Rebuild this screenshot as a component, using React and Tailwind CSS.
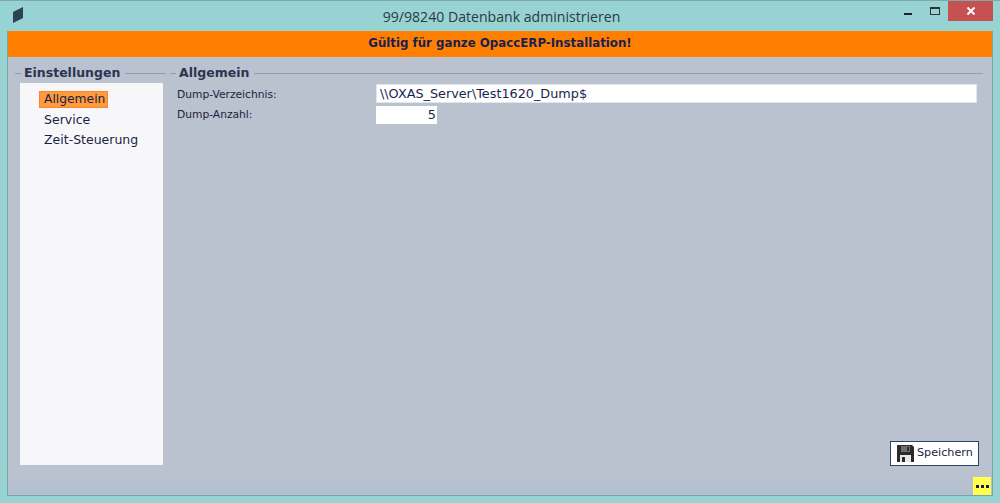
import React from "react";

const ui = "font-['DejaVu_Sans',sans-serif]";

function Legend({ text, className }) {
  return (
    <div className={`flex items-center h-[16px] ${className || ""}`}>
      <span className="w-[6px] h-px bg-[#8a9dbb]" />
      <span className="px-[3px] text-[12.5px] font-bold leading-[16px] text-[#2c3550] whitespace-nowrap">{text}</span>
      <span className="flex-1 h-px ml-[2px] bg-[#8a9dbb]" />
    </div>
  );
}

function FloppyIcon() {
  return (
    <svg width="17" height="17" viewBox="0 0 17 17">
      <path d="M0 0H15L17 2V17H0Z" fill="#2b2b2b" />
      <rect x="4" y="1" width="9" height="6" fill="#6e6e6e" />
      <rect x="10" y="2" width="2" height="4" fill="#2b2b2b" />
      <rect x="3" y="10" width="11" height="7" fill="#e8e8e8" />
      <rect x="5" y="12" width="3" height="5" fill="#2b2b2b" />
    </svg>
  );
}

export default function App() {
  return (
    <div className={`w-[1000px] h-[503px] flex flex-col overflow-hidden bg-[#97d3d2] border-t border-[#7fa9ac] ${ui}`}>
      <div className="h-[30px] shrink-0 flex items-center relative">
        <svg className="absolute left-[13px] top-[6px]" width="11" height="16" viewBox="0 0 11 16">
          <path d="M0 5L10 0V11L0 16Z" fill="#2c4257" />
        </svg>
        <div className="flex-1 text-center text-[14.1px] text-[#2d3a42] font-['Open_Sans',sans-serif] pt-[1px] pl-[3px]">
          99/98240 Datenbank administrieren
        </div>
        <div className="absolute right-[7px] top-0 flex items-start">
          <div className="w-[8px] h-[2px] bg-[#222] mt-[12px] mr-[18px]" />
          <div className="w-[10px] h-[8px] border border-[#333] border-t-2 mt-[6px] mr-[8px]" />
          <div className="w-[45px] h-[20px] bg-[#c75050] flex items-center justify-center">
            <svg width="8" height="8" viewBox="0 0 8 8">
              <path d="M0.5 0.5L7.5 7.5M7.5 0.5L0.5 7.5" stroke="#fff" strokeWidth="2" />
            </svg>
          </div>
        </div>
      </div>

      <div className="mx-[7px] flex-1 min-h-0 flex flex-col bg-[#bac1cf] border-l border-r border-b border-[#78a4a6]">
        <div className="h-[26px] shrink-0 bg-[#ff8000] flex items-center justify-center text-[11.8px] font-bold text-[#1a1f50]">
          Gültig für ganze OpaccERP-Installation!
        </div>

        <div className="flex-1 min-h-0 flex pt-[8px] pl-[7px] pr-[9px]">
          <div className="w-[151px] shrink-0 flex flex-col">
            <Legend text="Einstellungen" />
            <div className="ml-[5px] w-[143px] h-[382px] mt-[2px] bg-[#f7f7fa] pt-[8px] pl-[19px] flex flex-col items-start gap-[3px]">
              <div className="h-[17px] w-[69px] bg-[#ff9a3e] border border-[#f08a2c] text-[12.3px] leading-[15px] text-[#1a1f40] pl-[4px]">Allgemein</div>
              <div className="h-[17px] text-[12.5px] leading-[17px] text-[#1a1f40] pl-[5px]">Service</div>
              <div className="h-[17px] text-[12.5px] leading-[17px] text-[#1a1f40] pl-[5px]">Zeit-Steuerung</div>
            </div>
          </div>

          <div className="flex-1 min-w-0 ml-[4px] flex flex-col">
            <Legend text="Allgemein" />
            <div className="mt-[3px] flex items-center h-[19px] pl-[7px]">
              <span className="w-[199px] shrink-0 text-[10.7px] leading-[15px] pt-[1px] text-[#1a1f40]">Dump-Verzeichnis:</span>
              <div className="w-[601px] h-[19px] bg-white border border-[#e2e5ec] text-[12.8px] leading-[17px] pl-[3px] text-[#1a1f50]">\\OXAS_Server\Test1620_Dump$</div>
            </div>
            <div className="mt-[3px] flex items-center h-[18px] pl-[7px]">
              <span className="w-[199px] shrink-0 text-[10.7px] text-[#1a1f40]">Dump-Anzahl:</span>
              <div className="w-[61px] h-[18px] bg-white text-[12.8px] leading-[18px] text-right pr-[1px] text-[#1a1f50]">5</div>
            </div>
            <div className="flex-1" />
            <div className="flex justify-end mr-[4px] mb-[10px]">
              <button className="w-[89px] h-[25px] bg-white border border-[#2f4166] flex items-center pl-[6px] gap-[3px] text-[11.2px] text-[#1a1f40]">
                <FloppyIcon />
                <span>Speichern</span>
              </button>
            </div>
          </div>
        </div>

        <div className="h-[19px] shrink-0 bg-gradient-to-b from-[#bac1cf] to-[#b2bfd0] flex justify-end items-end">
          <div className="w-[18px] h-[18px] bg-[#ffff4d] flex items-center justify-center gap-[2px] mr-[1px]">
            <span className="w-[3px] h-[3px] bg-[#14184a]" />
            <span className="w-[3px] h-[3px] bg-[#14184a]" />
            <span className="w-[3px] h-[3px] bg-[#14184a]" />
          </div>
        </div>
      </div>
      <div className="h-[7px] shrink-0" />
    </div>
  );
}
